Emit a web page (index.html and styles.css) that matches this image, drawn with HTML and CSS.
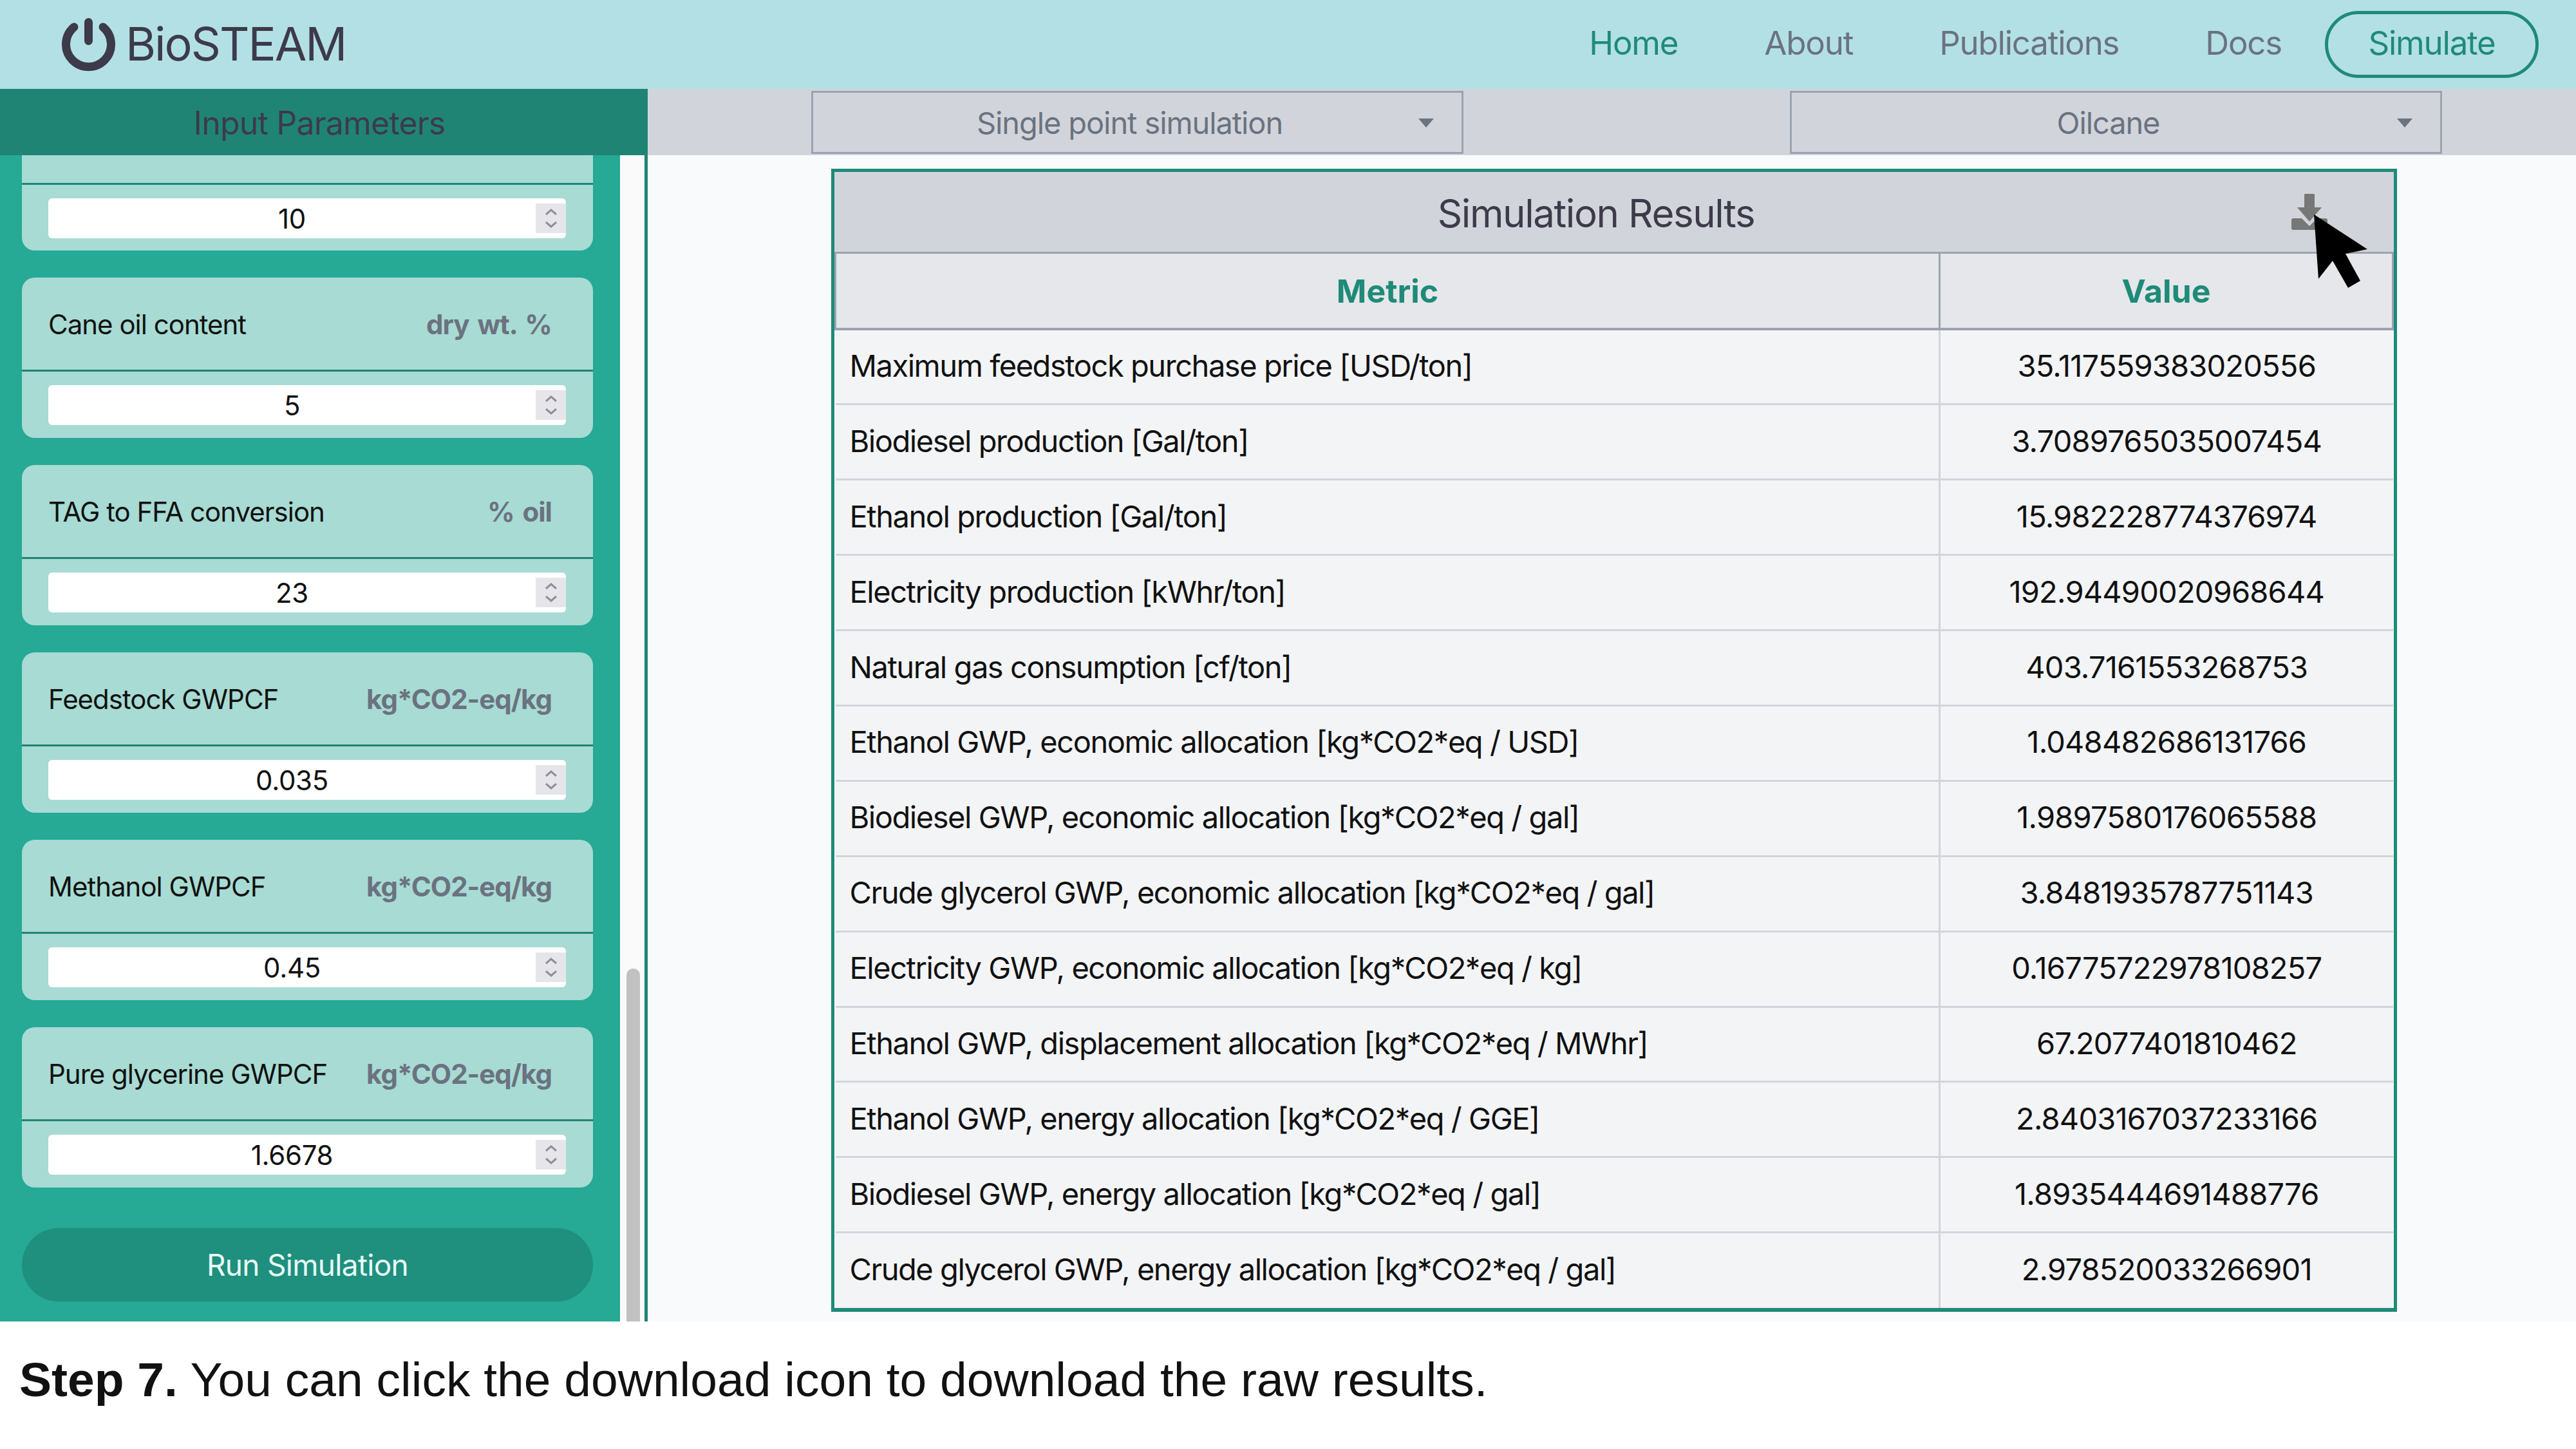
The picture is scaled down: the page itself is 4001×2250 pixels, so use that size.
FILE: index.html
```html
<!DOCTYPE html>
<html lang="en">
<head>
    <meta charset="UTF-8">
    <title>BioSTEAM</title>
    <link rel="stylesheet" href="styles.css">
</head>
<body>
    <nav class="navbar">
        <div class="logo">
            <svg class="logo-icon" viewBox="0 0 83 83" width="83" height="83">
                <path d="M19 14 A35 35 0 1 0 64 14" fill="none" stroke="#3d3a4a" stroke-width="13" stroke-linecap="round"/>
                <path d="M41.5 6.5 V35.5" fill="none" stroke="#3d3a4a" stroke-width="13" stroke-linecap="round"/>
            </svg>
            <span class="logo-text">BioSTEAM</span>
        </div>
        <div class="nav-links">
            <a class="nav-link active">Home</a>
            <a class="nav-link">About</a>
            <a class="nav-link">Publications</a>
            <a class="nav-link">Docs</a>
            <a class="nav-button">Simulate</a>
        </div>
    </nav>

    <main class="main">
        <aside class="sidebar">
            <div class="sidebar-title">Input Parameters</div>
            <div class="sidebar-body">
                <div class="params">
                    <div class="param param-cut">
                        <div class="param-head"></div>
                        <div class="param-input"><div class="num-field"><span class="num-value">10</span><span class="spinner"><svg viewBox="0 0 20 30" width="20" height="30"><path d="M2 9 L10 2 L18 9 M2 21 L10 28 L18 21" fill="none" stroke="#8f8f9a" stroke-width="3"/></svg></span></div></div>
                    </div>
                    <div class="param">
                        <div class="param-head"><span>Cane oil content</span><span class="unit">dry wt. %</span></div>
                        <div class="param-input"><div class="num-field"><span class="num-value">5</span><span class="spinner"><svg viewBox="0 0 20 30" width="20" height="30"><path d="M2 9 L10 2 L18 9 M2 21 L10 28 L18 21" fill="none" stroke="#8f8f9a" stroke-width="3"/></svg></span></div></div>
                    </div>
                    <div class="param">
                        <div class="param-head"><span>TAG to FFA conversion</span><span class="unit">% oil</span></div>
                        <div class="param-input"><div class="num-field"><span class="num-value">23</span><span class="spinner"><svg viewBox="0 0 20 30" width="20" height="30"><path d="M2 9 L10 2 L18 9 M2 21 L10 28 L18 21" fill="none" stroke="#8f8f9a" stroke-width="3"/></svg></span></div></div>
                    </div>
                    <div class="param">
                        <div class="param-head"><span>Feedstock GWPCF</span><span class="unit">kg*CO2-eq/kg</span></div>
                        <div class="param-input"><div class="num-field"><span class="num-value">0.035</span><span class="spinner"><svg viewBox="0 0 20 30" width="20" height="30"><path d="M2 9 L10 2 L18 9 M2 21 L10 28 L18 21" fill="none" stroke="#8f8f9a" stroke-width="3"/></svg></span></div></div>
                    </div>
                    <div class="param">
                        <div class="param-head"><span>Methanol GWPCF</span><span class="unit">kg*CO2-eq/kg</span></div>
                        <div class="param-input"><div class="num-field"><span class="num-value">0.45</span><span class="spinner"><svg viewBox="0 0 20 30" width="20" height="30"><path d="M2 9 L10 2 L18 9 M2 21 L10 28 L18 21" fill="none" stroke="#8f8f9a" stroke-width="3"/></svg></span></div></div>
                    </div>
                    <div class="param">
                        <div class="param-head"><span>Pure glycerine GWPCF</span><span class="unit">kg*CO2-eq/kg</span></div>
                        <div class="param-input"><div class="num-field"><span class="num-value">1.6678</span><span class="spinner"><svg viewBox="0 0 20 30" width="20" height="30"><path d="M2 9 L10 2 L18 9 M2 21 L10 28 L18 21" fill="none" stroke="#8f8f9a" stroke-width="3"/></svg></span></div></div>
                    </div>
                    <button class="run-button">Run Simulation</button>
                </div>
                <div class="scroll-track"><div class="scroll-thumb"></div></div>
            </div>
        </aside>

        <section class="content">
            <div class="select-bar">
                <div class="select"><span class="select-text">Single point simulation</span><span class="caret"></span></div>
                <div class="select"><span class="select-text">Oilcane</span><span class="caret"></span></div>
            </div>
            <div class="results">
                <div class="results-title">
                    Simulation Results
                    <svg class="download-icon" viewBox="0 0 56 56" width="56" height="56">
                        <path d="M21 0 H35 Q36 0 36 2 V21 H47 L28 43 L9 21 H20 V2 Q20 0 21 0 Z" fill="#777"/>
                        <path d="M3 38 H16 L28 50 L40 38 H53 Q56 38 56 41 V53 Q56 56 53 56 H3 Q0 56 0 53 V41 Q0 38 3 38 Z" fill="#777"/>
                    </svg>
                </div>
                <table class="results-table">
                    <thead>
                        <tr><th class="col-metric">Metric</th><th>Value</th></tr>
                    </thead>
                    <tbody>
                        <tr><td>Maximum feedstock purchase price [USD/ton]</td><td>35.117559383020556</td></tr>
                        <tr><td>Biodiesel production [Gal/ton]</td><td>3.7089765035007454</td></tr>
                        <tr><td>Ethanol production [Gal/ton]</td><td>15.982228774376974</td></tr>
                        <tr><td>Electricity production [kWhr/ton]</td><td>192.94490020968644</td></tr>
                        <tr><td>Natural gas consumption [cf/ton]</td><td>403.7161553268753</td></tr>
                        <tr><td>Ethanol GWP, economic allocation [kg*CO2*eq / USD]</td><td>1.048482686131766</td></tr>
                        <tr><td>Biodiesel GWP, economic allocation [kg*CO2*eq / gal]</td><td>1.9897580176065588</td></tr>
                        <tr><td>Crude glycerol GWP, economic allocation [kg*CO2*eq / gal]</td><td>3.8481935787751143</td></tr>
                        <tr><td>Electricity GWP, economic allocation [kg*CO2*eq / kg]</td><td>0.16775722978108257</td></tr>
                        <tr><td>Ethanol GWP, displacement allocation [kg*CO2*eq / MWhr]</td><td>67.2077401810462</td></tr>
                        <tr><td>Ethanol GWP, energy allocation [kg*CO2*eq / GGE]</td><td>2.8403167037233166</td></tr>
                        <tr><td>Biodiesel GWP, energy allocation [kg*CO2*eq / gal]</td><td>1.8935444691488776</td></tr>
                        <tr><td>Crude glycerol GWP, energy allocation [kg*CO2*eq / gal]</td><td>2.978520033266901</td></tr>
                    </tbody>
                </table>
                <svg class="cursor" viewBox="0 0 83 114" width="83" height="114">
                    <path d="M0 0 L83 54 L49 61 L72 103 L53 114 L29 72 L7 100 Z" fill="#000"/>
                </svg>
            </div>
        </section>
    </main>

    <p class="caption"><b>Step 7.</b> You can click the download icon to download the raw results.</p>
</body>
</html>
```

FILE: styles.css
```css
body {
    margin: 0;
    background-color: white;
    font-family: Inter, "Liberation Sans", sans-serif;
    color: #111;
    width: 4001px;
}

/* top nav */
.navbar {
    height: 138px;
    background-color: #b3e0e5;
    display: flex;
    justify-content: space-between;
    align-items: center;
    padding: 0 58px 0 96px;
    box-sizing: border-box;
}
.logo {
    display: flex;
    align-items: center;
    gap: 16px;
}
.logo-icon {
    display: block;
}
.logo-text {
    font-size: 72px;
    font-weight: 400;
    letter-spacing: -2px;
    color: #3d3a4a;
    padding-bottom: 4px;
}
.nav-links {
    display: flex;
    align-items: center;
}
.nav-link {
    font-size: 51px;
    letter-spacing: -1.2px;
    color: #6b7280;
    padding: 0 67px 6px;
}
.nav-link.active {
    color: #1f8a78;
}
.nav-button {
    width: 332px;
    height: 104px;
    box-sizing: border-box;
    border: 5px solid #1f8a78;
    border-radius: 52px;
    color: #1f8a78;
    font-size: 51px;
    letter-spacing: -1.2px;
    padding-bottom: 6px;
    display: flex;
    align-items: center;
    justify-content: center;
}

.main {
    display: flex;
    height: 1914px;
}

/* left column */
.sidebar {
    width: 1006px;
    flex-shrink: 0;
    box-sizing: border-box;
    border-right: 5px solid #1f8474;
    display: flex;
    flex-direction: column;
}
.sidebar-title {
    height: 103px;
    margin-right: -5px;
    padding: 2px 14px 0 0;
    box-sizing: border-box;
    background-color: #1f8474;
    color: #3d3a4a;
    font-size: 50px;
    letter-spacing: -0.8px;
    display: flex;
    align-items: center;
    justify-content: center;
    flex-shrink: 0;
}
.sidebar-body {
    flex: 1;
    display: flex;
    min-height: 0;
}
.params {
    width: 963px;
    box-sizing: border-box;
    background-color: #26a995;
    padding: 0 42px 0 34px;
    display: flex;
    flex-direction: column;
    gap: 42px;
}
.param {
    height: 249px;
    background-color: #a7dbd3;
    border-radius: 20px;
    display: flex;
    flex-direction: column;
}
.param-head {
    height: 146px;
    box-sizing: border-box;
    border-bottom: 3px solid #1f8474;
    padding: 2px 64px 0 41px;
    display: flex;
    align-items: center;
    justify-content: space-between;
    font-size: 42px;
    letter-spacing: -1px;
    flex-shrink: 0;
}
.unit {
    font-weight: 700;
    word-spacing: 4px;
    color: #6b7280;
}
.param-cut {
    height: 148px;
    border-radius: 0 0 20px 20px;
}
.param-cut .param-head {
    height: 46px;
}
.param-input {
    padding: 21px 42px 0 41px;
}
.num-field {
    height: 62px;
    background-color: white;
    border-radius: 6px;
    display: flex;
    align-items: center;
    font-size: 42px;
    letter-spacing: -0.3px;
}
.num-value {
    flex: 1;
    text-align: center;
}
.spinner {
    width: 47px;
    height: 46px;
    background-color: #e6e6ea;
    display: flex;
    align-items: center;
    justify-content: center;
}
.run-button {
    height: 114px;
    margin-top: 21px;
    flex-shrink: 0;
    border: none;
    border-radius: 57px;
    background-color: #1f8f7e;
    color: #e8fbf6;
    font-family: Inter, "Liberation Sans", sans-serif;
    font-size: 46px;
    letter-spacing: -0.7px;
}
.scroll-track {
    width: 38px;
    background-color: #fafafa;
    position: relative;
}
.scroll-thumb {
    position: absolute;
    left: 10px;
    right: 7px;
    top: 1263px;
    bottom: 0;
    background-color: #c1c1c1;
    border-radius: 10px 10px 0 0;
}

/* right column */
.content {
    flex: 1;
    background-color: #f9fafb;
}
.select-bar {
    height: 103px;
    background-color: #d1d5db;
    display: flex;
    align-items: center;
    padding-left: 254px;
    gap: 507px;
}
.select {
    width: 1013px;
    height: 98px;
    box-sizing: border-box;
    border: 3px solid #9ca3af;
    display: flex;
    align-items: center;
    padding: 2px 43px 0 43px;
    font-size: 47px;
    letter-spacing: -1.1px;
    color: #6b7280;
}
.select-text {
    flex: 1;
    text-align: center;
}
.caret {
    width: 0;
    height: 0;
    border-left: 12px solid transparent;
    border-right: 12px solid transparent;
    border-top: 14px solid #6b7280;
}
.results {
    position: relative;
    width: 2432px;
    box-sizing: border-box;
    margin: 21px 0 0 285px;
    border: 5px solid #1f8a78;
    border-bottom-width: 6px;
}
.results-title {
    position: relative;
    height: 127px;
    box-sizing: border-box;
    padding: 3px 56px 0 0;
    background-color: #d1d5db;
    border-bottom: 3px solid #9ca3af;
    display: flex;
    align-items: center;
    justify-content: center;
    font-size: 60px;
    letter-spacing: -1.4px;
    color: #3d3a4a;
}
.download-icon {
    position: absolute;
    left: 2263px;
    top: 34px;
}
.cursor {
    position: absolute;
    left: 2298px;
    top: 66px;
}
.results-table {
    width: 100%;
    table-layout: fixed;
    border-collapse: collapse;
    font-size: 47px;
    letter-spacing: -1.45px;
}
.results-table th {
    height: 115px;
    padding: 0;
    background-color: #e5e7eb;
    border-bottom: 4px solid #9ca3af;
    border-left: 3px solid #9ca3af;
    border-right: 3px solid #9ca3af;
    color: #1f8a78;
    font-size: 50px;
    font-weight: 700;
    letter-spacing: 0;
}
.col-metric {
    width: 1712px;
}
.results-table td {
    height: 116.9px;
    box-sizing: border-box;
    padding: 0 0 4px 22px;
    background-color: #f3f4f6;
    border-top: 3px solid #d1d5db;
}
.results-table td + td {
    padding: 0 0 4px;
    text-align: center;
    letter-spacing: -0.8px;
    border-left: 3px solid #d1d5db;
}

.caption {
    margin: 0;
    padding: 47px 0 0 30px;
    font-family: "Liberation Sans", Arial, sans-serif;
    font-size: 75px;
    color: #111;
}
```
